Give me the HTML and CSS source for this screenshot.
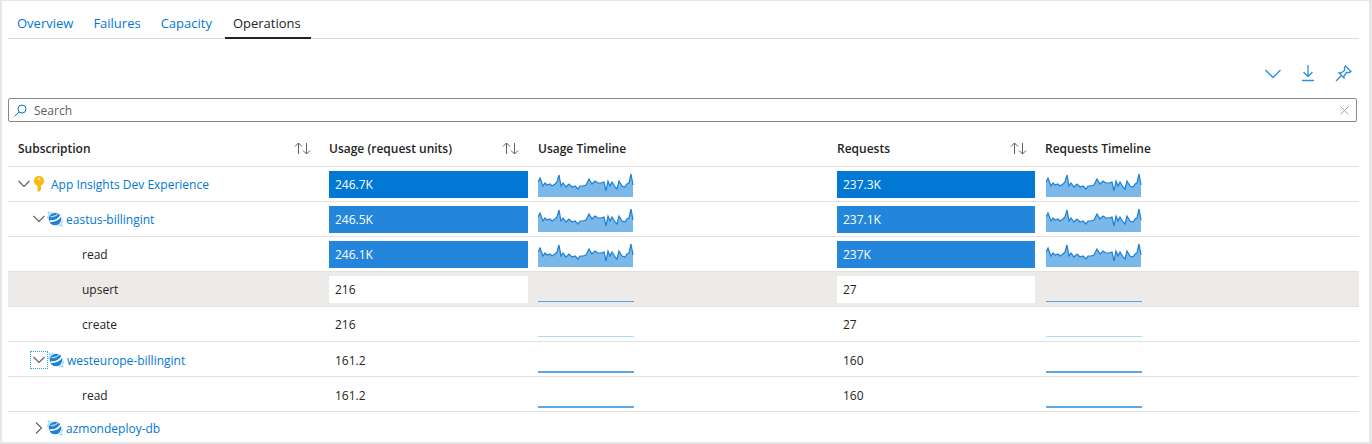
FILE: index.html
```html
<!DOCTYPE html>
<html lang="en">
<head>
    <meta charset="UTF-8">
    <meta name="viewport" content="width=device-width, initial-scale=1.0">
    <title>Operations</title>
    <link rel="stylesheet" href="styles.css">
</head>
<body>
    <svg class="defs" width="0" height="0">
        <symbol id="spark" viewBox="0 0 96 24" preserveAspectRatio="none">
            <path class="spark-fill" d="M0 9 2 5 5 13 7 10 9 12 12 11 14 13 17 11 19 9 21 2 23 13 25 10 28 14 31 11 34 14 37 13 40 16 42 13 45 13 48 12 51 6 54 11 57 8 60 10 63 10 66 9 68 18 70 8 72 13 74 9 77 14 79 16 81 8 84 13 87 14 89 11 91 10 93 1 95 12V24H0Z"/>
            <path class="spark-line" d="M0 9 2 5 5 13 7 10 9 12 12 11 14 13 17 11 19 9 21 2 23 13 25 10 28 14 31 11 34 14 37 13 40 16 42 13 45 13 48 12 51 6 54 11 57 8 60 10 63 10 66 9 68 18 70 8 72 13 74 9 77 14 79 16 81 8 84 13 87 14 89 11 91 10 93 1 95 12"/>
        </symbol>
        <symbol id="sort" viewBox="0 0 17 13">
            <path d="M4.5 12V1M1 4.5 4.5 1 8 4.5M12.5 1V12M9 8.5 12.5 12 16 8.5"/>
        </symbol>
        <symbol id="down" viewBox="0 0 12 8">
            <path d="M.5 1 6 6.5 11.5 1"/>
        </symbol>
        <symbol id="right" viewBox="0 0 8 12">
            <path d="M1 .5 6.5 6 1 11.5"/>
        </symbol>
        <symbol id="cosmos" viewBox="0 0 16 16">
            <circle cx="8" cy="8" r="6.300" fill="#1f80d6"/>
            <path d="M2.500 10C7 10.500 11.500 8.500 14 4.500" fill="none" stroke="#fff" stroke-width="1.600"/>
            <path d="M3.500 5.500C6.500 6 9.500 4.500 11 2.500" fill="none" stroke="#a9dcf8" stroke-width="1.200"/>
            <path d="M.6 7C.8 4.500 2.500 2 5 1M15.400 9C15.200 11.500 13.500 14 11 15" fill="none" stroke="#6fd3f5" stroke-width="1"/>
            <circle cx="1.500" cy="1.500" r="1" fill="#6fd3f5"/>
            <circle cx="14.500" cy="14.500" r="1" fill="#6fd3f5"/>
        </symbol>
    </svg>

    <div class="frame">
        <nav class="tabs">
            <a class="tab">Overview</a>
            <a class="tab">Failures</a>
            <a class="tab">Capacity</a>
            <a class="tab active">Operations</a>
        </nav>

        <div class="toolbar">
            <svg class="tool" width="16" height="10" viewBox="0 0 16 10"><path d="M.5 1 8 8.500 15.500 1"/></svg>
            <svg class="tool" width="12" height="17" viewBox="0 0 12 17"><path d="M6 0V11M1.500 7 6 11.500 10.500 7M0 15.500H12"/></svg>
            <svg class="tool" width="17" height="17" viewBox="0 0 17 17"><path d="M1 16 6 11M10.500 1 16 6.500 14.500 7.500 11.500 7.500 9 11 9 13 4 8 6 8 9.500 5.500 9.500 2.500Z"/></svg>
        </div>

        <div class="search">
            <svg class="search-icon" width="13" height="13" viewBox="0 0 13 13"><circle cx="8" cy="5" r="4"/><path d="M5 8 .5 12.500"/></svg>
            <span class="search-text">Search</span>
            <svg class="search-clear" width="9" height="9" viewBox="0 0 9 9"><path d="M.5 .5 8.500 8.500M8.500 .5 .5 8.500"/></svg>
        </div>

        <div class="grid">
            <div class="row head">
                <div class="cell name"><b>Subscription</b><svg class="sort"><use href="#sort"/></svg></div>
                <div class="cell"><b>Usage (request units)</b><svg class="sort"><use href="#sort"/></svg></div>
                <div class="cell"><b>Usage Timeline</b></div>
                <div class="cell"><b>Requests</b><svg class="sort"><use href="#sort"/></svg></div>
                <div class="cell"><b>Requests Timeline</b></div>
            </div>

            <div class="row">
                <div class="cell name lvl0">
                    <svg class="caret down"><use href="#down"/></svg>
                    <svg class="key" width="12" height="16" viewBox="0 0 12 16"><path d="M6 0A5 5 0 0 1 8 9.600V13.500L6 16 4 14 5 13 4 12 5 11 4 10V9.600A5 5 0 0 1 6 0Z" fill="#fcb813"/><circle cx="6" cy="3" r="1.200" fill="#fff2c4"/></svg>
                    <a class="link">App Insights Dev Experience</a>
                </div>
                <div class="cell"><div class="bar top">246.7K</div></div>
                <div class="cell"><svg class="spark"><use href="#spark"/></svg></div>
                <div class="cell"><div class="bar top">237.3K</div></div>
                <div class="cell"><svg class="spark"><use href="#spark"/></svg></div>
            </div>

            <div class="row">
                <div class="cell name lvl1">
                    <svg class="caret down"><use href="#down"/></svg>
                    <svg class="db"><use href="#cosmos"/></svg>
                    <a class="link">eastus-billingint</a>
                </div>
                <div class="cell"><div class="bar high">246.5K</div></div>
                <div class="cell"><svg class="spark"><use href="#spark"/></svg></div>
                <div class="cell"><div class="bar high">237.1K</div></div>
                <div class="cell"><svg class="spark"><use href="#spark"/></svg></div>
            </div>

            <div class="row">
                <div class="cell name lvl2">read</div>
                <div class="cell"><div class="bar high">246.1K</div></div>
                <div class="cell"><svg class="spark"><use href="#spark"/></svg></div>
                <div class="cell"><div class="bar high">237K</div></div>
                <div class="cell"><svg class="spark"><use href="#spark"/></svg></div>
            </div>

            <div class="row hover">
                <div class="cell name lvl2">upsert</div>
                <div class="cell"><div class="bar">216</div></div>
                <div class="cell"><div class="flat dark"></div></div>
                <div class="cell"><div class="bar">27</div></div>
                <div class="cell"><div class="flat dark"></div></div>
            </div>

            <div class="row">
                <div class="cell name lvl2">create</div>
                <div class="cell"><div class="bar">216</div></div>
                <div class="cell"><div class="flat pale"></div></div>
                <div class="cell"><div class="bar">27</div></div>
                <div class="cell"><div class="flat pale"></div></div>
            </div>

            <div class="row">
                <div class="cell name lvl1">
                    <span class="focus-box"><svg class="caret down"><use href="#down"/></svg></span>
                    <svg class="db"><use href="#cosmos"/></svg>
                    <a class="link">westeurope-billingint</a>
                </div>
                <div class="cell"><div class="bar">161.2</div></div>
                <div class="cell"><div class="flat"></div></div>
                <div class="cell"><div class="bar">160</div></div>
                <div class="cell"><div class="flat"></div></div>
            </div>

            <div class="row">
                <div class="cell name lvl2">read</div>
                <div class="cell"><div class="bar">161.2</div></div>
                <div class="cell"><div class="flat"></div></div>
                <div class="cell"><div class="bar">160</div></div>
                <div class="cell"><div class="flat"></div></div>
            </div>

            <div class="row last">
                <div class="cell name lvl1">
                    <svg class="caret closed"><use href="#right"/></svg>
                    <svg class="db"><use href="#cosmos"/></svg>
                    <a class="link">azmondeploy-db</a>
                </div>
            </div>
        </div>
    </div>
</body>
</html>
```

FILE: styles.css
```css
html, body {
    height: 100%;
}
body {
    margin: 0;
    background-color: #e6e6e6;
    font-family: "Open Sans", Arial, sans-serif;
    font-size: 12px;
    color: #252423;
    overflow: hidden;
}
.defs {
    display: block;
    height: 0;
}
.frame {
    box-sizing: border-box;
    height: 441px;
    margin: 1px 3px 0 2px;
    padding: 7px 10px 0 6px;
    background-color: #fff;
    overflow: hidden;
}
.tabs {
    display: flex;
    height: 31px;
    border-bottom: 1px solid #d9d9d9;
    box-sizing: border-box;
}
.tab {
    box-sizing: border-box;
    height: 31px;
    padding: 6px 9px 0 9px;
    margin-right: 2px;
    color: #0078d4;
    font-size: 13px;
}
.tab.active {
    width: 86px;
    margin-left: 2px;
    padding-left: 8px;
    color: #252423;
    border-bottom: 2px solid #252423;
}
.toolbar {
    display: flex;
    justify-content: flex-end;
    align-items: center;
    gap: 21px;
    height: 59px;
    padding: 10px 7px 0 0;
    box-sizing: border-box;
}
.tool {
    fill: none;
    stroke: #2b8ee0;
    stroke-width: 1.3;
}
.search {
    display: flex;
    align-items: center;
    box-sizing: border-box;
    height: 24px;
    margin-right: 2px;
    padding: 0 7px 0 5px;
    border: 1px solid #8a8886;
    border-radius: 2px;
}
.search-icon {
    fill: none;
    stroke: #0078d4;
    stroke-width: 1;
}
.search-text {
    margin-left: 7px;
    color: #605e5c;
}
.search-clear {
    margin-left: auto;
    fill: none;
    stroke: #a6a6a6;
}
.grid {
    margin-top: 10px;
}
.row {
    display: grid;
    grid-template-columns: 313px 209px 299px 209px 1fr;
    height: 35.15px;
    padding-top: 1.5px;
    box-sizing: border-box;
    border-bottom: 1.5px solid #e1e1e1;
}
.row.head {
    height: 34.5px;
    padding-top: 0;
}
.row.last {
    height: 32px;
    padding-top: 0;
    border-bottom: none;
}
.row.hover {
    background-color: #edebe9;
}
.cell {
    display: flex;
    align-items: center;
    min-width: 0;
    padding: 0 2px 0 8px;
}
.cell:nth-child(4) {
    padding-right: 3px;
}
.head b {
    font-weight: 600;
}
.head .cell {
    justify-content: space-between;
    padding-right: 10px;
}
.head .cell:nth-child(2),
.head .cell:nth-child(4) {
    padding-right: 11px;
}
.head .cell:nth-child(5) {
    padding-left: 7px;
}
.name {
    padding-left: 10px;
}
.lvl0 {
    padding-left: 10px;
}
.lvl1 {
    padding-left: 25px;
}
.lvl2 {
    padding-left: 74px;
}
.link {
    color: #0078d4;
    white-space: nowrap;
}
.sort {
    width: 17px;
    height: 13px;
    fill: none;
    stroke: #605e5c;
    stroke-width: 1;
}
.caret {
    fill: none;
    stroke: #605e5c;
    stroke-width: 1.1;
}
.caret.down {
    width: 12px;
    height: 8px;
    margin-right: 2px;
}
.caret.closed {
    width: 8px;
    height: 12px;
    margin: 0 4px 0 2px;
}
.focus-box {
    display: flex;
    align-items: center;
    justify-content: center;
    box-sizing: border-box;
    width: 18px;
    height: 18px;
    margin: 0 0 0 -3px;
    border: 1px dotted #18b0f0;
}
.focus-box .caret.down {
    margin-right: 0;
}
.lvl0 .caret.down {
    margin-right: 3px;
}
.key {
    margin-right: 6px;
}
.db {
    width: 16px;
    height: 16px;
    margin-right: 3px;
}
.bar {
    box-sizing: border-box;
    width: 100%;
    height: 27px;
    padding: 0 6px;
    line-height: 27px;
}
.bar.top {
    background-color: #0078d4;
    color: #fff;
}
.bar.high {
    background-color: #2386da;
    color: #fff;
}
.hover .bar {
    background-color: #fff;
}
.spark {
    display: block;
    width: 96px;
    height: 24px;
    margin-top: 1px;
}
.spark-fill {
    fill: #7ab8ea;
}
.spark-line {
    fill: none;
    stroke: #1b7fd4;
    stroke-width: 1.2;
}
.flat {
    align-self: flex-end;
    box-sizing: border-box;
    width: 96px;
    height: 2px;
    margin-bottom: 3px;
    background-color: #5aa9e8;
}
.flat.dark {
    height: 1px;
    margin-bottom: 4px;
    background-color: #5d9fd6;
}
.flat.pale {
    height: 1px;
    margin-bottom: 4px;
    background-color: #a8dcff;
}
```
